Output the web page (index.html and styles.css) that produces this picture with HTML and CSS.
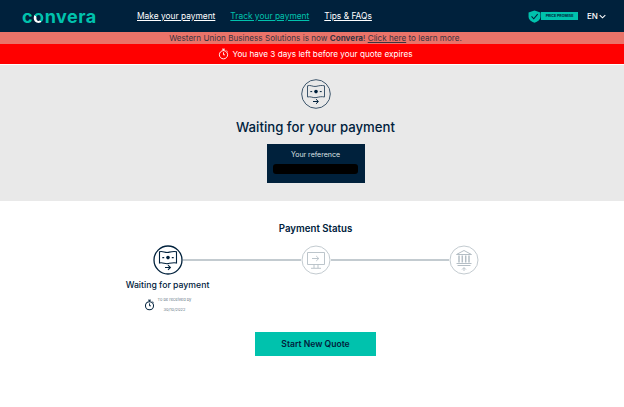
FILE: index.html
```html
<!DOCTYPE html>
<html>
<head>
	<title>Waiting for your payment</title>

	<link rel="stylesheet" href="styles.css">

</head>
<body>

	<header class="top-bar">
		<a class="logo" href="#">c<span class="logo-o">o</span>nvera</a>
		<nav class="nav">
			<a class="nav-link" href="#">Make your payment</a>
			<a class="nav-link nav-link-active" href="#">Track your payment</a>
			<a class="nav-link" href="#">Tips &amp; FAQs</a>
		</nav>
		<div class="promise">
			<svg class="promise-shield" viewBox="0 0 14 14">
				<path d="M7 .6 13.4 2.6V7C13.4 10.4 10.6 12.6 7 13.6 3.4 12.6.6 10.4.6 7V2.6Z" fill="#00c2ad"/>
				<path d="M3.8 6.8 6.2 9.4 10.4 4.4" fill="none" stroke="#00213c" stroke-width="1.1"/>
			</svg>
			<span class="promise-pill">PRICE PROMISE</span>
		</div>
		<div class="lang">
			EN
			<svg class="lang-arrow" viewBox="0 0 8 5">
				<path d="M.8.8 4 4 7.2.8" fill="none" stroke="#fff" stroke-width="1.2"/>
			</svg>
		</div>
	</header>

	<div class="notice">Western Union Business Solutions is now <b>Convera</b>! <a href="#">Click here</a> to learn more.</div>

	<div class="alert">
		<svg class="alert-icon" viewBox="0 0 12 12">
			<circle cx="6" cy="6.8" r="4.5" fill="none" stroke="#fff" stroke-width="1"/>
			<path d="M4.4.7H7.6M6 .7V2.3M6 4.2V6.9L7.6 6.9M9.4 2.2 10.4 3.2" fill="none" stroke="#fff" stroke-width="1"/>
		</svg>
		You have 3 days left before your quote expires
	</div>

	<section class="waiting">
		<svg class="round-icon waiting-icon" viewBox="0 0 30 30">
			<circle cx="15" cy="15" r="14.3" fill="none" stroke="#3d566c" stroke-width="1"/>
			<path d="M6.5 6.8C9.5 5.6 12 8 15 7.4 18 6.8 20.5 6 23.5 6.8V18C20.5 17.2 18 18 15 18.6 12 19.2 9.5 17 6.5 18Z" fill="none" stroke="#3d566c" stroke-width="1"/>
			<circle cx="15" cy="12.6" r="1.8" fill="#00213c"/>
			<path d="M9.3 12.6H11.2M18.8 12.6H20.7M12 22.5H17.2M15 20.2 17.4 22.5 15 24.8" fill="none" stroke="#00213c" stroke-width="1"/>
		</svg>
		<h1 class="waiting-title">Waiting for your payment</h1>
		<div class="ref-box">
			<span class="ref-label">Your reference</span>
			<span class="ref-hidden"></span>
		</div>
	</section>

	<section class="status">
		<h2 class="status-title">Payment Status</h2>
		<div class="steps">
			<div class="step step-line">
				<svg class="round-icon" viewBox="0 0 30 30">
					<circle cx="15" cy="15" r="14" fill="#fff" stroke="#00213c" stroke-width="1.3"/>
					<path d="M6.5 6.8C9.5 5.6 12 8 15 7.4 18 6.8 20.5 6 23.5 6.8V18C20.5 17.2 18 18 15 18.6 12 19.2 9.5 17 6.5 18Z" fill="none" stroke="#00213c" stroke-width="1.1"/>
					<circle cx="15" cy="12.6" r="1.8" fill="#00213c"/>
					<path d="M9.3 12.6H11.2M18.8 12.6H20.7M12 22.5H17.2M15 20.2 17.4 22.5 15 24.8" fill="none" stroke="#00213c" stroke-width="1.1"/>
				</svg>
				<span class="step-label">Waiting for payment</span>
				<div class="step-due">
					<svg class="due-icon" viewBox="0 0 12 12">
						<circle cx="6" cy="6.8" r="4.4" fill="none" stroke="#00213c" stroke-width="1.1"/>
						<path d="M4.4.7H7.6M6 .7V2.3M6 4.2V6.9L7.6 6.9M9.4 2.2 10.4 3.2" fill="none" stroke="#00213c" stroke-width="1"/>
					</svg>
					<div class="due-text">
						<span>To be received by</span>
						<span>30/10/2022</span>
					</div>
				</div>
			</div>
			<div class="step step-line">
				<svg class="round-icon" viewBox="0 0 30 30">
					<circle cx="15" cy="15" r="14" fill="#fff" stroke="#c3cbd0" stroke-width="1"/>
					<path d="M6.5 7.5H23.5V19.5H6.5ZM13 19.5V23M17 19.5V23M10 23.3H20M11 13.5H17.5M15.2 11 17.8 13.5 15.2 16" fill="none" stroke="#b4bec5" stroke-width=".9"/>
				</svg>
			</div>
			<div class="step">
				<svg class="round-icon" viewBox="0 0 30 30">
					<circle cx="15" cy="15" r="14" fill="#fff" stroke="#c3cbd0" stroke-width="1"/>
					<path d="M7.5 9.5 15 5.5 22.5 9.5ZM7.5 18.5H22.5M8.5 20.5H21.5" fill="none" stroke="#b4bec5" stroke-width="1"/>
					<path d="M10 10.5V17.5M13.3 10.5V17.5M16.7 10.5V17.5M20 10.5V17.5" fill="none" stroke="#b4bec5" stroke-width="1.5"/>
					<path d="M15 26V22.8M13 24.6 15 22.6 17 24.6" fill="none" stroke="#b4bec5" stroke-width=".9"/>
				</svg>
			</div>
		</div>
		<a class="start-btn" href="#">Start New Quote</a>
	</section>

</body>
</html>
```

FILE: styles.css
```css
* {
	box-sizing: border-box;
}
body {
	margin: 0;
	background-color: #fff;
	font-family: "Inter", "Open Sans", sans-serif;
	color: #00213c;
}
a {
	color: inherit;
}
.top-bar {
	display: flex;
	align-items: center;
	height: 32px;
	padding-left: 22px;
	background-color: #00213c;
}
.logo {
	width: 115px;
	font-size: 18px;
	font-weight: 700;
	letter-spacing: 0.5px;
	color: #00c2ad;
	text-decoration: none;
}
.logo-o {
	background: linear-gradient(225deg, #00c2ad 60%, #fff 60%);
	-webkit-background-clip: text;
	background-clip: text;
	color: transparent;
}
.nav {
	display: flex;
	gap: 15px;
	width: 391px;
}
.nav-link {
	font-size: 8.4px;
	color: #fff;
}
.nav-link-active {
	color: #00c2ad;
}
.promise {
	display: flex;
	align-items: center;
	width: 59px;
}
.promise-shield {
	width: 13px;
	height: 13px;
}
.promise-pill {
	width: 37px;
	height: 8px;
	background-color: #00c2ad;
	color: #00213c;
	font-size: 3.6px;
	font-weight: 700;
	line-height: 8px;
	text-align: center;
	white-space: nowrap;
}
.lang {
	display: flex;
	align-items: center;
	gap: 1.5px;
	font-size: 8px;
	font-weight: 500;
	color: #fff;
}
.lang-arrow {
	width: 7px;
	height: 5px;
}
/* the page below the header is centred a little right of the window middle */
.notice {
	height: 12px;
	padding-left: 7px;
	background-color: #ea7369;
	font-size: 8.15px;
	line-height: 12px;
	text-align: center;
	color: #3a3340;
}
.alert {
	display: flex;
	align-items: center;
	justify-content: center;
	gap: 3px;
	height: 20px;
	margin-bottom: 1px;
	padding-left: 7px;
	background-color: #ff0000;
	font-size: 8.2px;
	color: #fff;
}
.alert-icon {
	width: 11px;
	height: 12px;
}
.waiting {
	display: flex;
	flex-direction: column;
	align-items: center;
	height: 136px;
	padding: 14px 0 0 7px;
	background-color: #e9e9e9;
}
.round-icon {
	display: block;
	width: 30px;
	height: 30px;
}
.waiting-title {
	margin: 10px 0 8px;
	font-size: 13.2px;
	font-weight: 500;
	line-height: 17px;
}
.ref-box {
	display: flex;
	flex-direction: column;
	align-items: center;
	width: 98px;
	height: 39px;
	padding-top: 6px;
	background-color: #00213c;
}
.ref-label {
	font-size: 7px;
	line-height: 9px;
	color: #dfe3e6;
}
.ref-hidden {
	width: 85px;
	height: 10px;
	margin-top: 5px;
	border-radius: 3px;
	background-color: #000;
}
.status {
	display: flex;
	flex-direction: column;
	align-items: center;
	padding: 22px 0 0 7px;
}
.status-title {
	margin: 0 0 10px;
	font-size: 9.7px;
	font-weight: 600;
	line-height: 12px;
}
.steps {
	display: grid;
	grid-template-columns: repeat(3, 148px);
	height: 87px;
}
.step {
	position: relative;
	display: flex;
	flex-direction: column;
	align-items: center;
}
/* connector runs from this circle to the next one */
.step-line::after {
	content: "";
	position: absolute;
	top: 14px;
	left: 89px;
	width: 118px;
	height: 2px;
	background-color: #c3cbd0;
}
.step-label {
	margin-top: 4px;
	font-size: 8.7px;
	font-weight: 500;
	line-height: 12px;
	white-space: nowrap;
}
.step-due {
	display: flex;
	align-items: center;
	gap: 3px;
	margin-top: 6px;
}
.due-icon {
	width: 11px;
	height: 12px;
}
.due-text {
	display: flex;
	flex-direction: column;
	align-items: center;
	gap: 5px;
	font-size: 4px;
	line-height: 5px;
	color: #6b7b88;
}
.start-btn {
	display: block;
	width: 121px;
	height: 24px;
	background-color: #00c2ad;
	font-size: 8.6px;
	font-weight: 600;
	line-height: 24px;
	text-align: center;
	text-decoration: none;
}
```
